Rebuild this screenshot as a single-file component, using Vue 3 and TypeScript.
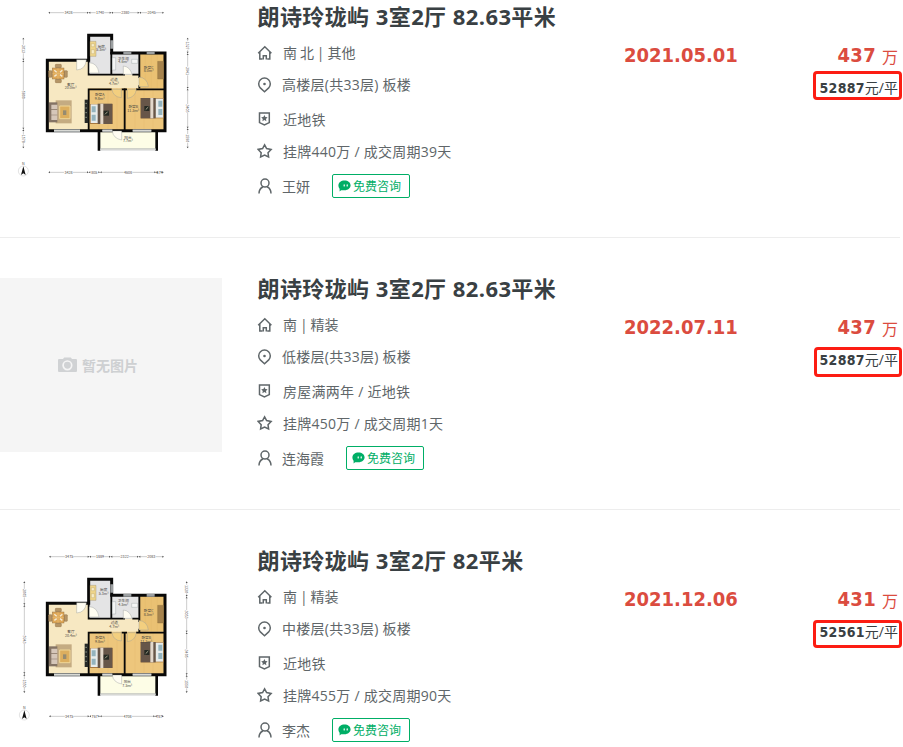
<script setup lang="ts">
type IconName = 'home' | 'pin' | 'badge' | 'star' | 'user'

interface Label { x: number; y: number; name: string; area: string }
interface Dimension { from: number; to: number; text: string }
interface Plan {
  roomTop: number
  innerTop: number
  hallTop: number
  bedTop: number
  bottom: number
  balconyBottom: number
  leftX: number
  rightX: number
  labels: Label[]
  top: Dimension[]
  base: Dimension[]
  left: Dimension[]
  right: Dimension[]
}
interface Listing {
  id: number
  title: string
  rows: { icon: IconName; text: string }[]
  agent: string
  date: string
  total: string
  unit: string
  plan: Plan | null
}

const planA: Plan = {
  roomTop: 159, innerTop: 138, hallTop: 202, bedTop: 247, bottom: 378, balconyBottom: 434, leftX: 70, rightX: 563,
  labels: [
    { x: 304, y: 125, name: '厨房', area: '5.5m²' },
    { x: 370, y: 161, name: '卫生间', area: '4.6m²' },
    { x: 446, y: 188, name: '卧室C', area: '8.0m²' },
    { x: 342, y: 226, name: '过道', area: '4.7m²' },
    { x: 212, y: 239, name: '客厅', area: '20.0m²' },
    { x: 299, y: 270, name: '卧室A', area: '9.8m²' },
    { x: 400, y: 306, name: '卧室B', area: '11.5m²' },
    { x: 384, y: 398, name: '阳台', area: '7.7m²' },
  ],
  top: [{ from: 145, to: 266, text: '3428' }, { from: 266, to: 334, text: '1740' }, { from: 334, to: 418, text: '2380' }, { from: 418, to: 492, text: '2045' }],
  base: [{ from: 145, to: 266, text: '3428' }, { from: 266, to: 300, text: '805' }, { from: 300, to: 468, text: '4608' }, { from: 468, to: 490, text: '674' }],
  left: [{ from: 95, to: 163, text: '2013' }, { from: 163, to: 370, text: '5800' }, { from: 370, to: 427, text: '1578' }],
  right: [{ from: 95, to: 142, text: '1327' }, { from: 142, to: 248, text: '2941' }, { from: 248, to: 367, text: '3405' }, { from: 367, to: 427, text: '1590' }],
}

const planB: Plan = {
  roomTop: 156, innerTop: 133, hallTop: 202, bedTop: 245, bottom: 378, balconyBottom: 437, leftX: 73, rightX: 560,
  labels: [
    { x: 311, y: 123, name: '厨房', area: '5.3m²' },
    { x: 370, y: 157, name: '卫生间', area: '4.5m²' },
    { x: 446, y: 186, name: '卧室C', area: '8.5m²' },
    { x: 343, y: 223, name: '过道', area: '4.7m²' },
    { x: 213, y: 249, name: '客厅', area: '20.4m²' },
    { x: 300, y: 268, name: '卧室A', area: '9.8m²' },
    { x: 439, y: 268, name: '卧室B', area: '11.5m²' },
    { x: 382, y: 399, name: '阳台', area: '7.5m²' },
  ],
  top: [{ from: 147, to: 268, text: '3475' }, { from: 268, to: 332, text: '1889' }, { from: 332, to: 416, text: '2322' }, { from: 416, to: 492, text: '2083' }],
  base: [{ from: 147, to: 268, text: '3475' }, { from: 268, to: 300, text: '767' }, { from: 300, to: 465, text: '4708' }, { from: 465, to: 491, text: '787' }],
  left: [{ from: 94, to: 165, text: '2005' }, { from: 165, to: 372, text: '5943' }, { from: 372, to: 429, text: '1550' }],
  right: [{ from: 94, to: 140, text: '1320' }, { from: 140, to: 247, text: '3053' }, { from: 247, to: 375, text: '3405' }, { from: 375, to: 429, text: '1550' }],
}

const listings: Listing[] = [
  {
    id: 1,
    title: '朗诗玲珑屿 3室2厅 82.63平米',
    rows: [
      { icon: 'home', text: '南 北 | 其他' },
      { icon: 'pin', text: '高楼层(共33层) 板楼' },
      { icon: 'badge', text: '近地铁' },
      { icon: 'star', text: '挂牌440万 / 成交周期39天' },
    ],
    agent: '王妍', date: '2021.05.01', total: '437', unit: '52887', plan: planA,
  },
  {
    id: 2,
    title: '朗诗玲珑屿 3室2厅 82.63平米',
    rows: [
      { icon: 'home', text: '南 | 精装' },
      { icon: 'pin', text: '低楼层(共33层) 板楼' },
      { icon: 'badge', text: '房屋满两年 / 近地铁' },
      { icon: 'star', text: '挂牌450万 / 成交周期1天' },
    ],
    agent: '连海霞', date: '2022.07.11', total: '437', unit: '52887', plan: null,
  },
  {
    id: 3,
    title: '朗诗玲珑屿 3室2厅 82平米',
    rows: [
      { icon: 'home', text: '南 | 精装' },
      { icon: 'pin', text: '中楼层(共33层) 板楼' },
      { icon: 'badge', text: '近地铁' },
      { icon: 'star', text: '挂牌455万 / 成交周期90天' },
    ],
    agent: '李杰', date: '2021.12.06', total: '431', unit: '52561', plan: planB,
  },
]

const icons: Record<IconName, string> = {
  home: 'M1.2 8.2 7.8 1.7l6.6 6.5M2.8 7v7h2.6M12.8 7v7h-2.6M6.3 14.5v-3.7h3v3.7',
  pin: 'M7.5 14.7 3.3 10.9a5.8 5.8 0 1 1 8.4 0Z',
  badge: 'M2.5 1.9h9.8v9.7l-4.9 2.3-4.9-2.3Z',
  star: 'm7.6 1.8 2 3.8 4.5.8-3.1 3.3.6 4.3-4-1.9L3.600 14l.6-4.300L1.100 6.400l4.500-.8Z',
  user: 'M8 1.100a4 4 0 1 1 0 8 4 4 0 0 1 0-8ZM2 15.500c.1-3.600 1.500-5.500 3.800-6.500M14 15.500c-.1-3.600-1.400-5.500-3.700-6.500',
}

const shell = (p: Plan) =>
  `M142 ${p.roomTop + 4}H266V88H335V${p.innerTop + 3}H495V${p.bottom - 4}H142Z`
const inner = (p: Plan) =>
  `M266 ${p.roomTop}V${p.hallTop + 4}H375M397 ${p.hallTop + 4}H418M334 ${p.innerTop}V${p.hallTop + 4}` +
  `M418 ${p.innerTop}V${p.hallTop + 14}M418 ${p.bedTop - 9}V${p.bedTop}` +
  `M266 ${p.bottom}V${p.bedTop + 3}H335M365 ${p.bedTop + 3}H381M408 ${p.bedTop + 3}H494M374 ${p.bedTop}V${p.bottom}`
const mid = (d: Dimension) => (d.from + d.to) / 2
</script>

<template>
  <main class="list">
    <article v-for="item in listings" :key="item.id" class="item">
      <div class="thumb" :class="{ empty: !item.plan }">
        <svg v-if="item.plan" class="plan" viewBox="0 0 666 522">
          <path :d="shell(item.plan)" fill="#f7e8c2" />
          <path :d="`M266 88H335V${item.plan.hallTop + 4}H266Z`" fill="#e4e4e5" />
          <path :d="`M334 ${item.plan.innerTop}H418V${item.plan.hallTop + 4}H334Z`" fill="#e4e4e5" />
          <path :d="`M418 ${item.plan.innerTop}H495V${item.plan.bedTop}H418Z`" fill="#eac173" />
          <path :d="`M266 ${item.plan.bedTop}H495V${item.plan.bottom - 4}H266Z`" fill="#edc67c" />
          <path :d="`M300 ${item.plan.bottom - 4}H468V${item.plan.balconyBottom - 4}H300Z`" fill="#fdfde6" />
          <g stroke="#d9aa58" stroke-width="1" opacity=".4">
            <path v-for="n in 7" :key="n" :d="`M${270 + n * 27} ${item.plan.bedTop}V${item.plan.bottom}`" />
            <path v-for="n in 3" :key="`c${n}`" :d="`M${418 + n * 18} ${item.plan.innerTop}V${item.plan.bedTop}`" />
          </g>
          <path :d="shell(item.plan)" fill="none" stroke="#080808" stroke-width="9" />
          <path :d="inner(item.plan)" fill="none" stroke="#080808" stroke-width="5.500" />
          <path :d="`M297 ${item.plan.bottom}V${item.plan.balconyBottom}M470 ${item.plan.bottom}V${item.plan.balconyBottom}`" stroke="#080808" stroke-width="8" />
          <g fill="none" stroke="#9b9fa1" stroke-width="8">
            <path :d="`M162 ${item.plan.bottom - 4}h78M307 ${item.plan.bottom - 4}h30M398 ${item.plan.bottom - 4}h56M370 ${item.plan.innerTop + 3}h24M440 ${item.plan.innerTop + 3}h24M335 103v25`" />
            <path :d="`M300 ${item.plan.balconyBottom - 4}h168`" stroke-width="5" />
          </g>
          <path :d="`M162 ${item.plan.bottom - 4}h78M307 ${item.plan.bottom - 4}h30M398 ${item.plan.bottom - 4}h56M301 ${item.plan.balconyBottom - 4}h165`" stroke="#e4e4df" stroke-width="3" />
          <g fill="#fffdf2" stroke="#94999a" stroke-width="1.2">
            <path :d="`M230 ${item.plan.roomTop + 2}v31q27-2 29-31Z`" />
            <path d="M268 201v-31q24 1 29 31Z" />
            <path :d="`M370 ${item.plan.hallTop + 3}v-25q20 2 26 25Z`" />
            <path :d="`M417 ${item.plan.bedTop - 5}v-29q25 3 28 29Z`" fill="#f3cf7f" />
            <path :d="`M336 ${item.plan.bedTop + 3}h28v25q-25-2-28-25M382 ${item.plan.bedTop + 3}h27q-3 24-27 27Z`" fill="#f3cf7f" />
            <path :d="`M337 ${item.plan.bottom - 3}h28v27q-26-5-28-27Z`" />
          </g>
          <g stroke="#86633b" stroke-width="1.2">
            <g fill="#b59566">
              <rect x="166" y="175" width="18" height="10" rx="2" /><rect x="166" y="220" width="18" height="10" rx="2" />
              <rect x="146" y="194" width="10" height="20" rx="2" /><rect x="192" y="194" width="10" height="20" rx="2" />
            </g>
            <rect x="157" y="186" width="35" height="33" fill="#dfa858" />
            <path d="M157 203h35M174 186v33" stroke="#f1cc88" />
            <path d="m163 193 7 6m10 0 7-6m-24 18 7-5m10 0 7 5" stroke="#f4ebd5" stroke-width="4" />
          </g>
          <rect x="167" y="283" width="48" height="69" fill="#c4ab82" />
          <path d="M147 289h25v60h-25Z" fill="#847365" />
          <path d="M154 296h18v14h-18Zm0 16h18v14h-18Zm0 16h18v14h-18Z" fill="#d5c6b9" />
          <path d="M179 300h31v38h-31Z" fill="#dcae5e" stroke="#f0d697" stroke-width="3" />
          <path d="M189 313h10v14h-10Z" fill="#968b70" />
          <path d="M254 281h11v70h-11Z" fill="#262927" />
          <path d="M256 292h5m-5 14h5m-5 14h5m-5 14h5" stroke="#889080" stroke-width="3" />
          <path d="M270 106h18v45h-18Z" fill="#efd58b" stroke="#8d8168" />
          <path d="M274 113h9v9h-9Zm0 18h9v12h-9Z" fill="#f7edc8" stroke="#b2975b" />
          <path d="M337 155h10v37h-10ZM395 160h18v12h-18Z" fill="#f4f5f5" stroke="#898f91" />
          <path d="M473 166h18v53h-18Z" fill="#a6834d" stroke="#816333" />
          <g>
            <path d="M270 294h68v60h-68Z" fill="#a77941" />
            <path d="M272 295h25v56h-25Z" fill="#e8eceb" /><path d="M275 301h12v18h-12Zm0 25h12v18h-12Z" fill="#94b3bd" />
            <path d="M293 293h44v61h-44Z" fill="#675649" /><path d="M301 293h9v61h-9Z" fill="#e3d8cb" />
            <path d="M311 314h16v15h-16Z" fill="#252923" /><path d="m315 325 8-8" stroke="#e3dfbd" stroke-width="2" />
          </g>
          <g>
            <path d="M422 276h69v61h-69Z" fill="#a77941" />
            <path d="M466 278h23v57h-23Z" fill="#e8eceb" /><path d="M475 284h12v18h-12Zm0 25h12v18h-12Z" fill="#94b3bd" />
            <path d="M422 276h45v61h-45Z" fill="#675649" /><path d="M451 276h9v61h-9Z" fill="#e3d8cb" />
            <path d="M433 300h15v15h-15Z" fill="#252923" /><path d="m437 311 8-8" stroke="#e3dfbd" stroke-width="2" />
          </g>
          <g class="room">
            <template v-for="label in item.plan.labels" :key="label.name">
              <text :x="label.x" :y="label.y">{{ label.name }}</text>
              <text :x="label.x" :y="label.y + 11">{{ label.area }}</text>
            </template>
          </g>
          <g class="dims">
            <g v-for="(row, index) in [item.plan.top, item.plan.base]" :key="index" :transform="`translate(0 ${index ? 499 : 20})`">
              <g v-for="d in row" :key="d.from">
                <path :d="`M${d.from + 2} 0H${mid(d) - 13}M${mid(d) + 13} 0H${d.to - 2}`" />
                <path class="tip" :d="`M${d.from} 0l5-3v6ZM${d.to} 0l-5-3v6Z`" />
                <text :x="mid(d)" y="4">{{ d.text }}</text>
              </g>
            </g>
            <g v-for="(row, index) in [item.plan.left, item.plan.right]" :key="`v${index}`" :transform="`translate(${index ? item.plan.rightX : item.plan.leftX} 0) rotate(90)`">
              <g v-for="d in row" :key="d.from">
                <path v-if="d.to - d.from > 28" :d="`M${d.from + 2} 0H${mid(d) - 13}M${mid(d) + 13} 0H${d.to - 2}`" />
                <path class="tip" :d="`M${d.from} 0l5-3v6ZM${d.to} 0l-5-3v6Z`" />
                <text :x="mid(d)" y="4">{{ d.text }}</text>
              </g>
            </g>
          </g>
          <g :transform="`translate(${item.plan.leftX} 495)`">
            <circle r="15" fill="#fff" stroke="#a9a9a9" />
            <path d="m0-14 7 26-7-5-7 5Z" fill="#111" />
            <text class="north" y="-18">N</text>
          </g>
        </svg>
        <template v-else>
          <svg class="camera" viewBox="0 0 19 16">
            <path fill="#d0d2d4" d="M1 2h4l1.2-1.5h6.6L14 2h4a1 1 0 0 1 1 1v11a1 1 0 0 1-1 1H1a1 1 0 0 1-1-1V3a1 1 0 0 1 1-1Z" />
            <circle cx="9.4" cy="8.3" r="4.3" fill="#d0d2d4" stroke="#f5f5f5" stroke-width="1.7" />
          </svg>
          <span>暂无图片</span>
        </template>
      </div>

      <div class="info">
        <h2>{{ item.title }}</h2>
        <div v-for="row in item.rows" :key="row.icon" class="row" :class="row.icon">
          <svg class="icon" viewBox="0 0 16 16">
            <path :d="icons[row.icon]" />
            <circle v-if="row.icon === 'pin'" class="solid" cx="7.5" cy="7" r="1.3" />
            <path v-if="row.icon === 'badge'" class="solid" d="m7.400 4 1 2 2.200.3-1.600 1.600.4 2.300-2-1.100-2 1.100.4-2.300-1.600-1.600L6.400 6Z" />
          </svg>
          <span>{{ row.text }}</span>
        </div>
        <div class="row user">
          <svg class="icon" viewBox="0 0 16 16"><path :d="icons.user" /></svg>
          <span class="agent">{{ item.agent }}</span>
          <button type="button" class="consult">
            <svg viewBox="0 0 13 12">
              <path fill="#00ae66" d="M6.5.4c3.5 0 6.1 2.1 6.1 4.9s-2.6 5-6.1 5H3.1l-1.5 1.2V8.8C.9 7.9.4 6.7.4 5.3.4 2.5 3 .4 6.5.4Z" />
              <path fill="none" stroke="#fff" stroke-width="1.2" stroke-linecap="round" d="M6.2 4.9v1M9.2 4.9v1" />
            </svg>
            <span>免费咨询</span>
          </button>
        </div>
      </div>

      <div class="date">{{ item.date }}</div>

      <div class="price">
        <div class="total"><b>{{ item.total }}</b><span>万</span></div>
        <div class="unit"><b>{{ item.unit }}</b><span>元/平</span></div>
        <i class="mark" :class="`mark-${item.id}`"></i>
      </div>
    </article>
  </main>
</template>

<style>
body { background: #fff; overflow: hidden; }
</style>

<style scoped>
.list {
  width: 903px;
  height: 781px;
  margin-top: -34px;
  overflow: hidden;
  color: #394043;
  font-family: "Open Sans", "Noto Sans CJK SC", sans-serif;
}
.item {
  position: relative;
  display: flex;
  box-sizing: border-box;
  width: 900px;
  height: 272px;
  padding-top: 40px;
  border-bottom: 1px solid #ededed;
}
.thumb {
  display: flex;
  flex: none;
  align-items: center;
  justify-content: center;
  width: 222px;
  height: 174px;
  margin-right: 35px;
}
.thumb.empty {
  box-sizing: border-box;
  gap: 5px;
  padding-right: 26px;
  background: #f5f5f5;
  color: #ced0d2;
  font-size: 14px;
  font-weight: 700;
}
.plan { display: block; width: 222px; height: 174px; }
.plan text { text-anchor: middle; fill: #4a463f; font-family: "Noto Sans CJK SC", sans-serif; }
.room text { font-size: 11px; }
.dims text, .plan .north { font-size: 11px; }
.dims path { fill: none; stroke: #999; stroke-width: 1.5; }
.dims .tip { fill: #555; stroke: none; }
.camera { width: 19px; height: 16px; }
.info { width: 367px; }
h2 {
  height: 31px;
  margin: -5px 0 10px 0.5px;
  font-size: 22px;
  font-weight: 700;
  letter-spacing: 0.38px;
  word-spacing: 0.3px;
  line-height: 31px;
  white-space: pre;
}
.row {
  display: flex;
  align-items: center;
  height: 22px;
  color: #606669;
  font-size: 14px;
  letter-spacing: 0.25px;
  line-height: 22px;
  white-space: pre;
}
.home { letter-spacing: 0; word-spacing: -0.7px; }
.pin { margin-top: 10px; }
.badge { margin-top: 12px; }
.star { margin-top: 10px; }
.user { margin-top: 13px; letter-spacing: 0; }
.badge > span, .star > span, .agent { padding-top: 2px; }
.icon {
  flex: none;
  width: 16px;
  height: 16px;
  margin-right: 10px;
  fill: none;
  stroke: #5f6669;
  stroke-width: 1.5;
}
.home .icon, .pin .icon { margin-bottom: 1px; }
.icon .solid { fill: #5f6669; stroke: none; }
.pin .icon, .user .icon { margin-right: 9px; }
.consult {
  display: flex;
  align-items: center;
  gap: 2px;
  box-sizing: border-box;
  width: 78px;
  height: 24px;
  margin: 0 0 0 22px;
  padding: 0 0 0 5px;
  border: 1px solid #00ae66;
  border-radius: 2px;
  background: #fff;
  color: #00ae66;
  font: 12px/22px "Noto Sans CJK SC", sans-serif;
}
.consult svg { width: 13px; height: 12px; }
.date {
  width: 130px;
  padding: 37px 0 0;
  color: #db4c3f;
  font: 700 20px/24px "DejaVu Sans Condensed", "DejaVu Sans", sans-serif;
  font-stretch: condensed;
}
.price { flex: 1; padding: 37px 2px 0 0; text-align: right; white-space: nowrap; }
.total, .unit { display: flex; justify-content: flex-end; align-items: center; }
.total { gap: 6px; height: 24px; color: #db4c3f; font-size: 16px; line-height: 24px; }
.total span { padding-top: 3px; }
.unit { height: 20px; margin-top: 11px; font-size: 14px; line-height: 20px; }
b { font-family: "DejaVu Sans Condensed", "DejaVu Sans", sans-serif; font-stretch: condensed; font-weight: 700; }
.total b { font-size: 20px; letter-spacing: 0.3px; }
.unit b { letter-spacing: 0.3px; }
.mark {
  position: absolute;
  right: -2px;
  box-sizing: border-box;
  width: 89px;
  border: 3px solid #fc1d13;
  border-radius: 4px;
}
.mark-1 { top: 105px; height: 29px; }
.mark-2 { top: 109px; width: 88px; height: 30px; }
.mark-3 { top: 110px; height: 28px; }
</style>
